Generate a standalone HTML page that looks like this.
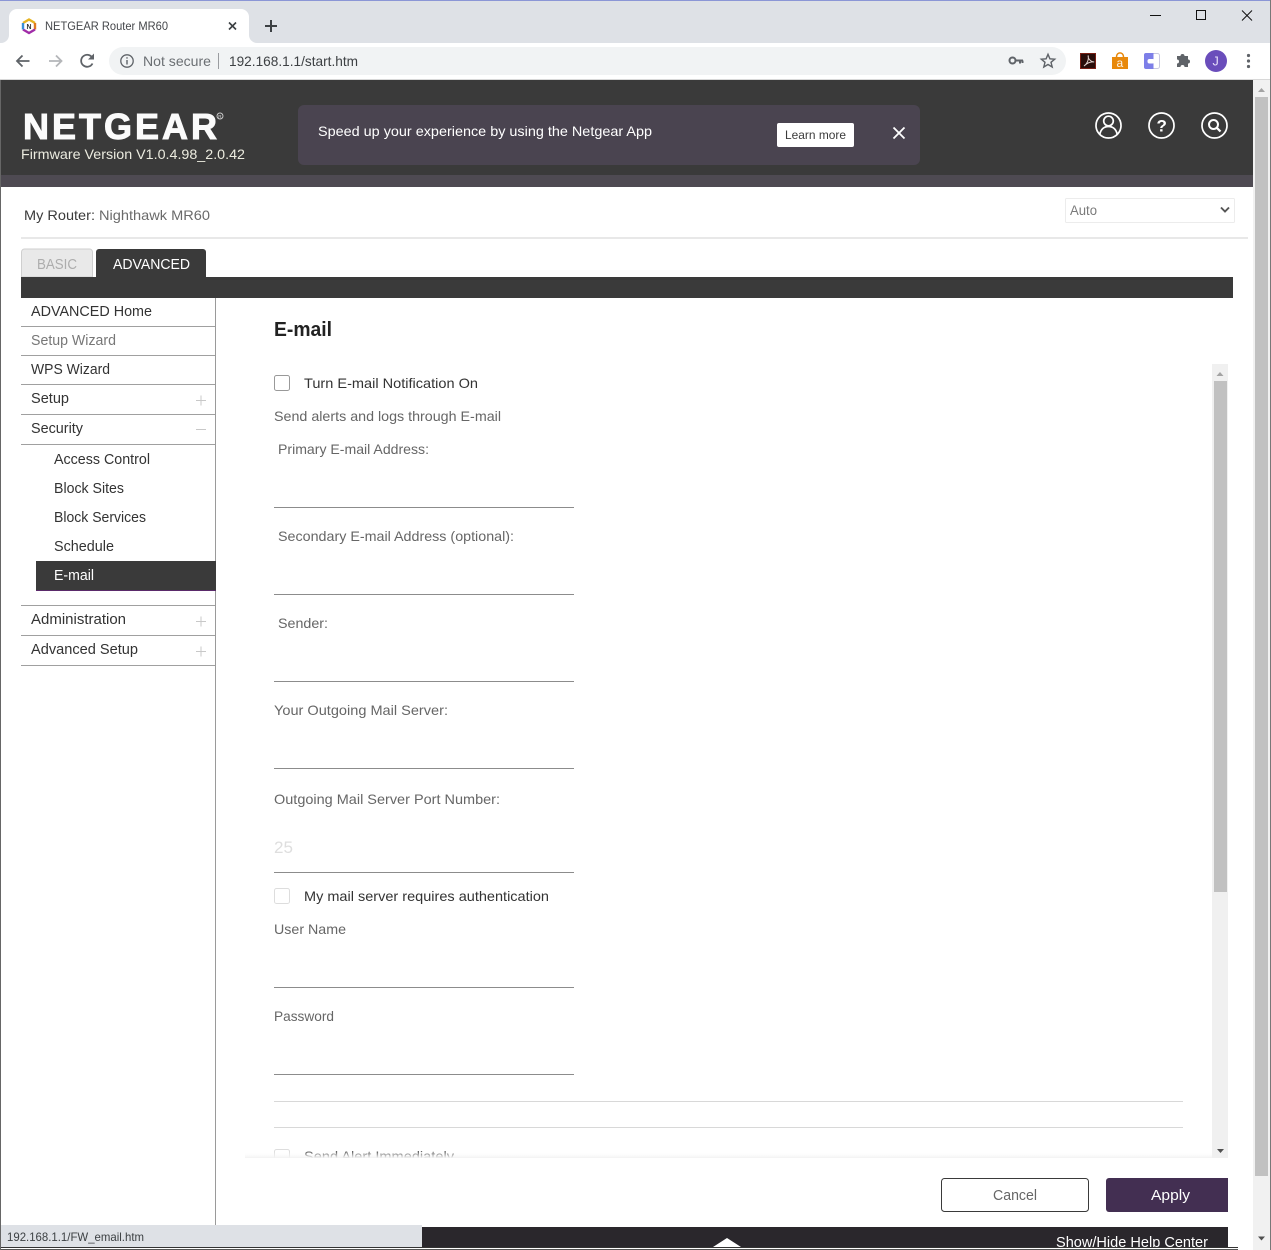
<!DOCTYPE html>
<html lang="en"><head><meta charset="utf-8"><title>NETGEAR Router MR60</title>
<style>
html,body{margin:0;padding:0;background:#fff;width:1271px;height:1250px;overflow:hidden}
svg{display:block;position:absolute;left:0;top:0}
text{font-family:"Liberation Sans",sans-serif;white-space:pre}
</style></head><body>
<svg width="1271" height="1250" viewBox="0 0 1271 1250" xmlns="http://www.w3.org/2000/svg">
<defs>
<clipPath id="c1"><rect x="240" y="360" width="980" height="798"/></clipPath>
<clipPath id="c2"><rect x="0" y="1227" width="1228" height="20"/></clipPath>
<linearGradient id="fade" x1="0" x2="0" y1="0" y2="1"><stop offset="0" stop-color="#fff" stop-opacity="0"/><stop offset="1" stop-color="#f2f2f2"/></linearGradient>
</defs>
<rect width="1271" height="1250" fill="#fff"/>
<!-- chrome -->
<rect width="1271" height="43" fill="#dee1e6"/>
<rect width="1271" height="1" fill="#8b96d6"/>
<path d="M9 43V17a8 8 0 0 1 8-8H241a8 8 0 0 1 8 8V43Z" fill="#fff"/>
<path d="M1 43a8 8 0 0 0 8-8V43ZM257 43a8 8 0 0 1-8-8V43Z" fill="#fff"/>
<path d="M29 19.500l6 3.500v6.500l-6 3.500-6-3.500V23Z" fill="#fff"/>
<path d="M23 23 29 19.500 35 23" fill="none" stroke="#e6b422" stroke-width="2.400"/>
<path d="M35 23v6.500" fill="none" stroke="#e07a20" stroke-width="2.400"/>
<path d="M35 29.500 29 33 23 29.500" fill="none" stroke="#a02ca8" stroke-width="2.400"/>
<path d="M23 29.500V23" fill="none" stroke="#3a8fd8" stroke-width="2.400"/>
<text x="26.500" y="29" font-size="7.500" font-weight="bold" fill="#333" textLength="5" lengthAdjust="spacingAndGlyphs">N</text>
<text x="45" y="30" font-size="12" fill="#45474b" textLength="123" lengthAdjust="spacingAndGlyphs">NETGEAR Router MR60</text>
<path d="M229 22.500l7 7M236 22.500l-7 7" stroke="#3c4043" stroke-width="1.600"/>
<path d="M271 20v12M265 26h12" stroke="#3c4043" stroke-width="2"/>
<rect x="0" y="43" width="1271" height="36" fill="#fff"/>
<rect x="0" y="79" width="1271" height="1" fill="#d8d8d8"/>
<path d="M29.500 61H17M22.500 55.500 17 61l5.500 5.500" fill="none" stroke="#5f6368" stroke-width="1.800"/>
<path d="M49 61h12.500M56 55.500l5.500 5.500-5.500 5.500" fill="none" stroke="#b4b6b9" stroke-width="1.800"/>
<path d="M92.500 63.500a6 6 0 1 1 .2-5" fill="none" stroke="#5f6368" stroke-width="1.800"/><path d="M94 53.500v6h-6Z" fill="#5f6368"/>
<rect x="109" y="47" width="957" height="28" rx="14" fill="#f1f3f4"/>
<circle cx="127" cy="61" r="6.200" fill="none" stroke="#5f6368" stroke-width="1.300"/>
<path d="M127 60v4.500M127 57.300v1.300" stroke="#5f6368" stroke-width="1.400"/>
<text x="143" y="66" font-size="14" fill="#6b6f73" textLength="68" lengthAdjust="spacingAndGlyphs">Not secure</text>
<rect x="218" y="53" width="1" height="16" fill="#9a9ca0"/>
<text x="229" y="66" font-size="14" fill="#3d4043" textLength="129" lengthAdjust="spacingAndGlyphs">192.168.1.1/start.htm</text>
<circle cx="1012.500" cy="60.500" r="3" fill="none" stroke="#5f6368" stroke-width="2"/>
<path d="M1015 60.500h8M1020 60.500v3M1022.500 60.500v2.500" stroke="#5f6368" stroke-width="2"/>
<path d="M1048 54.300l1.900 4.500 4.800.4-3.700 3.100 1.200 4.700-4.200-2.500-4.200 2.500 1.200-4.700-3.700-3.100 4.800-.4Z" fill="none" stroke="#5f6368" stroke-width="1.400"/>
<rect x="1080.500" y="53.500" width="15" height="15" fill="#2a0d0a" stroke="#7a1f14"/>
<path d="M1084 66c3-2 5-6 4.200-10.500-.5 3 2 6 6 6.500-3.500-.5-7 1-10.200 4Z" fill="none" stroke="#e0d0cc" stroke-width="1"/>
<path d="M1112 57h16v12h-16Z" fill="#e8890c"/><path d="M1116.500 57c0-5.500 7-5.500 7 0" fill="none" stroke="#e8890c" stroke-width="1.500"/>
<text x="1116.500" y="67" font-size="12" fill="#fff" fill-opacity=".9">a</text>
<rect x="1144.500" y="53.500" width="15" height="15" rx="2" fill="#fff" stroke="#c9c9e0"/><path d="M1146 53h7.500v16h-7.500a2 2 0 0 1-2-2V55a2 2 0 0 1 2-2Z" fill="#7d7fe8"/>
<rect x="1147.500" y="59" width="7" height="4.500" rx="2" fill="#fff"/>
<path d="M1177 58h3.500a2 2 0 1 1 4 0h3.500v3.500a2 2 0 1 1 0 4V69h-3.500a2 2 0 1 0-4 0H1177v-3.500a2 2 0 1 0 0-4Z" transform="translate(0,-2)" fill="#5f6368"/>
<circle cx="1216" cy="61" r="11" fill="#6a4dbb"/>
<text x="1212.500" y="65.500" font-size="12.500" fill="#e8e0fa">J</text>
<circle cx="1248.500" cy="55.500" r="1.600" fill="#5f6368"/><circle cx="1248.500" cy="61" r="1.600" fill="#5f6368"/><circle cx="1248.500" cy="66.500" r="1.600" fill="#5f6368"/>
<rect x="1150" y="15" width="11" height="1" fill="#111"/>
<rect x="1196.500" y="10.500" width="9" height="9" fill="none" stroke="#111"/>
<path d="M1242 10.500l10 10M1252 10.500l-10 10" stroke="#111" stroke-width="1"/>
<!-- frame -->
<rect x="0" y="80" width="1" height="1170" fill="#666"/>
<rect x="1270" y="0" width="1" height="1250" fill="#777"/>
<!-- header -->
<rect x="1" y="80" width="1252" height="95" fill="#3a3a3a"/>
<rect x="1" y="175" width="1252" height="12" fill="#4e4a52"/>
<text x="23" y="139" font-size="36" font-weight="bold" fill="#fbfbfb" stroke="#fbfbfb" stroke-width="1" textLength="194" lengthAdjust="spacing">NETGEAR</text>
<circle cx="220" cy="116" r="3" fill="none" stroke="#cfcfcf" stroke-width=".9"/>
<text x="218.300" y="118" font-size="4.500" fill="#ddd">R</text>
<text x="21" y="159" font-size="14" fill="#ecece0" textLength="224" lengthAdjust="spacingAndGlyphs">Firmware Version V1.0.4.98_2.0.42</text>
<rect x="298" y="105" width="622" height="60" rx="6" fill="#4a4450"/>
<text x="318" y="136" font-size="14" fill="#fff" textLength="334" lengthAdjust="spacingAndGlyphs">Speed up your experience by using the Netgear App</text>
<rect x="777" y="123" width="77" height="24" rx="2" fill="#fff"/>
<text x="785" y="139" font-size="12" fill="#3a3a3a" textLength="61" lengthAdjust="spacingAndGlyphs">Learn more</text>
<path d="M893.500 127.500l11 11M904.500 127.500l-11 11" stroke="#fff" stroke-width="1.800"/>
<g fill="none" stroke="#fff" stroke-width="1.700">
<circle cx="1108.500" cy="125.500" r="12.500"/>
<circle cx="1108.500" cy="121" r="4.800"/>
<path d="M1099.800 134.500c1-5.500 4.500-8 8.700-8s7.700 2.500 8.700 8"/>
<circle cx="1161.500" cy="125.500" r="12.500"/>
<circle cx="1214.500" cy="125.500" r="12.500"/>
<circle cx="1213.500" cy="124.500" r="4.500" stroke-width="2"/>
<path d="M1216.800 127.800l3.700 3.700" stroke-width="2.200"/>
</g>
<text x="1156.500" y="131.500" font-size="17" font-weight="bold" fill="#fff">?</text>
<!-- page scrollbar -->
<rect x="1253" y="80" width="17" height="1170" fill="#f1f1f1"/>
<rect x="1255" y="97" width="13" height="1079" fill="#c1c1c1"/>
<path d="M1258 92l3.500-4 3.500 4Z" fill="#a3a3a3"/>
<path d="M1258 1236.500h7l-3.500 4Z" fill="#505050"/>
<!-- top row -->
<text x="24" y="220" font-size="14" fill="#3a3a3a" textLength="71" lengthAdjust="spacingAndGlyphs">My Router:</text>
<text x="99" y="220" font-size="14" fill="#6a6a6a" textLength="111" lengthAdjust="spacingAndGlyphs">Nighthawk MR60</text>
<rect x="1065.500" y="198.500" width="169" height="24" rx="1" fill="#fff" stroke="#ececec"/>
<text x="1070" y="215" font-size="13.500" fill="#7a7a7a" textLength="27" lengthAdjust="spacingAndGlyphs">Auto</text>
<path d="M1221 207.500l4 4 4-4" fill="none" stroke="#555" stroke-width="1.900"/>
<rect x="21" y="237" width="1227" height="2" fill="#e8e8e8"/>
<!-- tabs -->
<path d="M21.500 277V252a3 3 0 0 1 3-3H89.500a3 3 0 0 1 3 3V277Z" fill="#e9e9e9" stroke="#cfcfcf"/>
<text x="37" y="269" font-size="14.500" fill="#adadad" textLength="40" lengthAdjust="spacingAndGlyphs">BASIC</text>
<path d="M96 277V252a3 3 0 0 1 3-3H203a3 3 0 0 1 3 3V277Z" fill="#3a3a3a"/>
<text x="113" y="269" font-size="14.500" fill="#fff" textLength="77" lengthAdjust="spacingAndGlyphs">ADVANCED</text>
<rect x="21" y="277" width="1212" height="21" fill="#3a3a3a"/>
<!-- sidebar -->
<rect x="215" y="298" width="1" height="928" fill="#9a9a9a"/>
<g fill="#a0a0a0">
<rect x="21" y="326" width="194" height="1"/><rect x="21" y="355" width="194" height="1"/><rect x="21" y="384" width="194" height="1"/><rect x="21" y="414" width="194" height="1"/><rect x="21" y="444" width="194" height="1"/><rect x="21" y="605" width="194" height="1"/><rect x="21" y="635" width="194" height="1"/><rect x="21" y="665" width="194" height="1"/>
</g>
<rect x="36" y="561" width="180" height="30" fill="#3a3a3a"/>
<rect x="36" y="590" width="180" height="1" fill="#5a2a6a"/>
<g font-size="14.500" fill="#333">
<text x="31" y="316" textLength="121" lengthAdjust="spacingAndGlyphs">ADVANCED Home</text>
<text x="31" y="345" fill="#777" textLength="85" lengthAdjust="spacingAndGlyphs">Setup Wizard</text>
<text x="31" y="374" textLength="79" lengthAdjust="spacingAndGlyphs">WPS Wizard</text>
<text x="31" y="403" textLength="38" lengthAdjust="spacingAndGlyphs">Setup</text>
<text x="31" y="433" textLength="52" lengthAdjust="spacingAndGlyphs">Security</text>
<text x="54" y="464" textLength="96" lengthAdjust="spacingAndGlyphs">Access Control</text>
<text x="54" y="493" textLength="70" lengthAdjust="spacingAndGlyphs">Block Sites</text>
<text x="54" y="522" textLength="92" lengthAdjust="spacingAndGlyphs">Block Services</text>
<text x="54" y="551" textLength="60" lengthAdjust="spacingAndGlyphs">Schedule</text>
<text x="54" y="580" fill="#fff" textLength="40" lengthAdjust="spacingAndGlyphs">E-mail</text>
<text x="31" y="624" textLength="95" lengthAdjust="spacingAndGlyphs">Administration</text>
<text x="31" y="654" textLength="107" lengthAdjust="spacingAndGlyphs">Advanced Setup</text>
</g>
<g stroke="#c8c8c8" stroke-width="1">
<path d="M196 400.500h10M201 395.500v10"/>
<path d="M196 429.500h10"/>
<path d="M196 621.500h10M201 616.500v10"/>
<path d="M196 651.500h10M201 646.500v10"/>
</g>
<!-- content -->
<text x="274" y="336" font-size="20" font-weight="bold" fill="#222" textLength="58" lengthAdjust="spacingAndGlyphs">E-mail</text>
<g clip-path="url(#c1)">
<rect x="274.500" y="375.500" width="15" height="15" rx="2" fill="#fff" stroke="#999"/>
<rect x="274.500" y="888.500" width="15" height="15" rx="2" fill="#fff" stroke="#ddd"/>
<rect x="274.500" y="1149.500" width="15" height="15" rx="2" fill="#fff" stroke="#ddd"/>
<g font-size="14" fill="#666">
<text x="304" y="388" fill="#333" textLength="174" lengthAdjust="spacingAndGlyphs">Turn E-mail Notification On</text>
<text x="274" y="421" textLength="227" lengthAdjust="spacingAndGlyphs">Send alerts and logs through E-mail</text>
<text x="278" y="454" textLength="151" lengthAdjust="spacingAndGlyphs">Primary E-mail Address:</text>
<text x="278" y="541" textLength="236" lengthAdjust="spacingAndGlyphs">Secondary E-mail Address (optional):</text>
<text x="278" y="628" textLength="50" lengthAdjust="spacingAndGlyphs">Sender:</text>
<text x="274" y="715" textLength="174" lengthAdjust="spacingAndGlyphs">Your Outgoing Mail Server:</text>
<text x="274" y="804" textLength="226" lengthAdjust="spacingAndGlyphs">Outgoing Mail Server Port Number:</text>
<text x="274" y="853" font-size="17" fill="#dedede" textLength="19" lengthAdjust="spacingAndGlyphs">25</text>
<text x="304" y="901" fill="#333" textLength="245" lengthAdjust="spacingAndGlyphs">My mail server requires authentication</text>
<text x="274" y="934" textLength="72" lengthAdjust="spacingAndGlyphs">User Name</text>
<text x="274" y="1021" textLength="60" lengthAdjust="spacingAndGlyphs">Password</text>
<text x="304" y="1161" textLength="150" lengthAdjust="spacingAndGlyphs">Send Alert Immediately</text>
</g>
<g fill="#8c8c8c">
<rect x="274" y="507" width="300" height="1"/><rect x="274" y="594" width="300" height="1"/><rect x="274" y="681" width="300" height="1"/><rect x="274" y="768" width="300" height="1"/><rect x="274" y="872" width="300" height="1"/><rect x="274" y="987" width="300" height="1"/><rect x="274" y="1074" width="300" height="1"/>
</g>
<rect x="274" y="1101" width="909" height="1" fill="#d8d8d8"/>
<rect x="274" y="1127" width="909" height="1" fill="#d8d8d8"/>
</g>
<rect x="245" y="1152" width="968" height="6" fill="url(#fade)"/>
<!-- inner scrollbar -->
<rect x="1212" y="364" width="16" height="794" fill="#f0f0f0"/>
<rect x="1214" y="381" width="13" height="511" fill="#c1c1c1"/>
<path d="M1216.500 376l3.500-4 3.500 4Z" fill="#a3a3a3"/>
<path d="M1217 1149h7l-3.500 4Z" fill="#505050"/>
<!-- buttons -->
<rect x="941.500" y="1178.500" width="147" height="33" rx="3" fill="#fff" stroke="#3a3a3a"/>
<text x="993" y="1200" font-size="14.500" fill="#666" textLength="44" lengthAdjust="spacingAndGlyphs">Cancel</text>
<path d="M1109 1178H1228V1212H1109a3 3 0 0 1-3-3V1181a3 3 0 0 1 3-3Z" fill="#432f52"/>
<text x="1151" y="1200" font-size="15" fill="#fff" textLength="39" lengthAdjust="spacingAndGlyphs">Apply</text>
<!-- footer -->
<rect x="422" y="1227" width="806" height="20" fill="#2a272c"/>
<path d="M713 1247l14-9 14 9Z" fill="#fff"/>
<g clip-path="url(#c2)"><text x="1056" y="1247" font-size="14.500" fill="#fff" textLength="152" lengthAdjust="spacingAndGlyphs">Show/Hide Help Center</text></g>
<rect x="1" y="1225" width="421" height="22" fill="#dee1e6"/>
<text x="7" y="1241" font-size="12" fill="#3c4043" textLength="137" lengthAdjust="spacingAndGlyphs">192.168.1.1/FW_email.htm</text>
<rect x="1" y="1247" width="1237" height="1" fill="#333"/>
<rect x="1" y="1249" width="1237" height="1" fill="#555"/>
</svg>
</body></html>
